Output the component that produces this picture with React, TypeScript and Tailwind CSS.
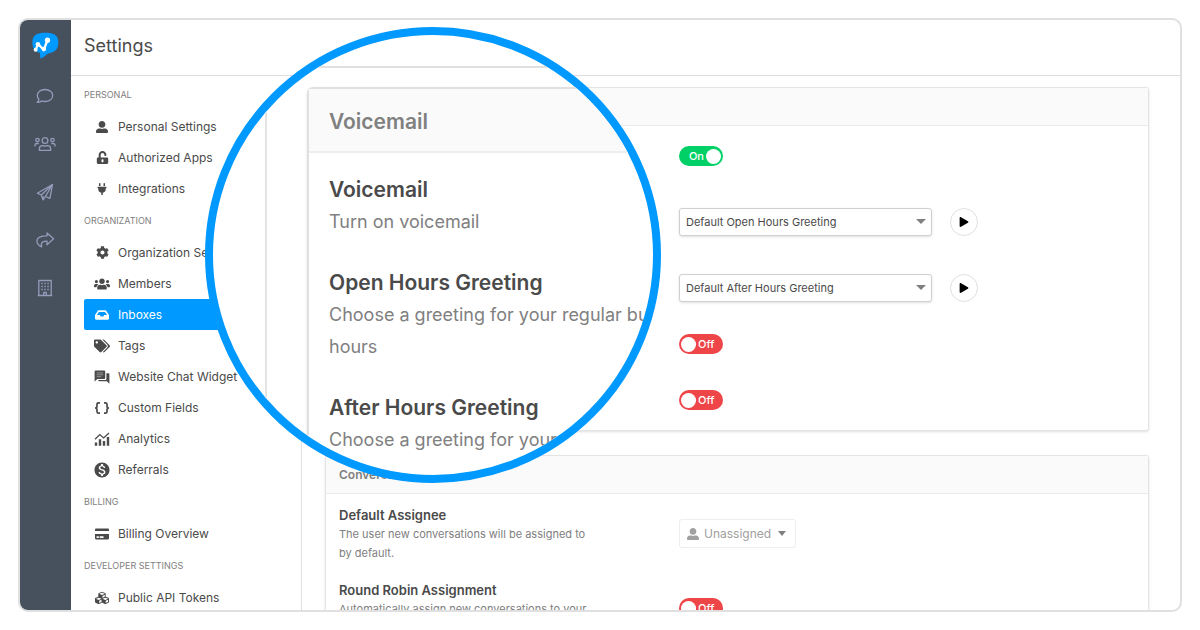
import type { ReactNode } from "react";
import {
  FaCog,
  FaCreditCard,
  FaCubes,
  FaInbox,
  FaPlay,
  FaPlug,
  FaTags,
  FaUnlockAlt,
  FaUserAlt,
  FaUsers,
} from "react-icons/fa";
import { MdMonetizationOn } from "react-icons/md";

const ChatWidgetIcon = () => (
  <svg viewBox="0 0 16 14" className="h-[14px] w-4" fill="currentColor">
    <path d="M1.600.5h8.600a1 1 0 0 1 1 1v6.600a1 1 0 0 1-1 1H3.400L.6 11.600V1.500a1 1 0 0 1 1-1z" />
    <path d="M12.400 3.200h2a1 1 0 0 1 1 1v9.500l-2.600-2.500H5.200a1 1 0 0 1-1-1v-.2h7.200a1 1 0 0 0 1-1z" />
    <path
      d="M2.600 2.900h6.600M2.600 4.800h6.600M2.600 6.700h4.600"
      stroke="white"
      strokeOpacity="0.600"
      strokeWidth="0.700"
    />
  </svg>
);

const BracesIcon = () => (
  <svg
    viewBox="0 0 16 14"
    className="h-[14px] w-4"
    fill="none"
    stroke="currentColor"
    strokeWidth="1.700"
  >
    <path d="M6 1.800H4.600c-1.100 0-1.600.5-1.600 1.500v1.900C3 6.300 2.400 7 1 7c1.400 0 2 .7 2 1.800v1.900c0 1 .5 1.500 1.600 1.500H6" />
    <path d="M10 1.800h1.400c1.100 0 1.600.5 1.600 1.500v1.900c0 1.100.6 1.800 2 1.800-1.400 0-2 .7-2 1.800v1.900c0 1-.5 1.500-1.600 1.500H10" />
  </svg>
);

const AnalyticsIcon = () => (
  <svg viewBox="0 0 16 14" className="h-[14px] w-4" fill="currentColor">
    <path d="M.800 10.400h2.400v3.400H.800zM4.800 7.300h2.400v6.500H4.800zM8.800 9h2.400v4.800H8.800zM12.800 5h2.400v8.800h-2.400z" />
    <path
      d="M1 7.300l4.800-4.700 3.800 3.300 5.400-5"
      fill="none"
      stroke="currentColor"
      strokeWidth="1.300"
    />
  </svg>
);

const sections = [
  {
    title: "PERSONAL",
    items: [
      { name: "Personal Settings", icon: <FaUserAlt className="size-3" /> },
      { name: "Authorized Apps", icon: <FaUnlockAlt className="size-[13px]" /> },
      { name: "Integrations", icon: <FaPlug className="size-3" /> },
    ],
  },
  {
    title: "ORGANIZATION",
    items: [
      { name: "Organization Settings", icon: <FaCog className="size-[13px]" /> },
      { name: "Members", icon: <FaUsers className="size-4" /> },
      { name: "Inboxes", icon: <FaInbox className="size-[14px]" />, active: true },
      { name: "Tags", icon: <FaTags className="size-4" /> },
      { name: "Website Chat Widget", icon: <ChatWidgetIcon /> },
      { name: "Custom Fields", icon: <BracesIcon /> },
      { name: "Analytics", icon: <AnalyticsIcon /> },
      { name: "Referrals", icon: <MdMonetizationOn className="size-[18px]" /> },
    ],
  },
  {
    title: "BILLING",
    items: [{ name: "Billing Overview", icon: <FaCreditCard className="size-[14px]" /> }],
  },
  {
    title: "DEVELOPER SETTINGS",
    items: [{ name: "Public API Tokens", icon: <FaCubes className="size-[14px]" /> }],
  },
];

const railIcons = [
  {
    name: "Conversations",
    paths: (
      <path d="M10 3.500c4.500 0 7.700 2.600 7.700 6s-3.200 6-7.700 6c-1.200 0-2.300-.2-3.300-.6-1 .9-2.500 1.500-4.600 1.500 1.100-1 1.700-2.100 1.800-3.200-1-1-1.600-2.300-1.600-3.700 0-3.400 3.200-6 7.700-6z" />
    ),
  },
  {
    name: "Contacts",
    paths: (
      <>
        <circle cx="10" cy="6.500" r="2.900" />
        <circle cx="2.500" cy="6" r="1.700" />
        <circle cx="17.500" cy="6" r="1.700" />
        <path d="M4.400 16.400v-1.700c0-2 1.300-3.100 3-3.100 1 .5 4.200.5 5.200 0 1.700 0 3 1.100 3 3.100v1.700z" />
        <path d="M0 12.400v-1c0-1.200.7-1.900 1.900-1.900h2M20 12.400v-1c0-1.200-.7-1.900-1.900-1.900h-2" />
      </>
    ),
  },
  {
    name: "Broadcasts",
    paths: (
      <>
        <path d="M17.500 2.500L2.300 11.200l4 1.800 1.900 4.800 2.200-3.300 4.500 1.800z" />
        <path d="M17.500 2.500L6.300 13M17.500 2.500l-7.100 12M8.200 17.800v-3.600" />
      </>
    ),
  },
  {
    name: "Forwarding",
    paths: (
      <path d="M12 2.900l6.600 5.900-6.600 5.900v-3.500c-4.200 0-6.500.9-5.400 5.700-2.600-1-4.700-3-4.700-5.800 0-4 3.500-5.200 10.100-5.200z" />
    ),
  },
  {
    name: "Company",
    paths: (
      <>
        <path d="M3.800 17.500v-15h12.400v15M2.800 17.500h14.400M8.700 17.500v-3h2.600v3" />
        <path
          d="M6.300 5.500h1.500m1.500 0h1.500m1.500 0h1.500M6.300 8.500h1.500m1.500 0h1.500m1.500 0h1.500M6.300 11.500h1.500m1.500 0h1.500m1.500 0h1.500"
          strokeWidth="1.600"
        />
      </>
    ),
  },
];

function Logo() {
  return (
    <svg viewBox="64 64 82 82" className="size-[27px]">
      <path
        d="M105 66c24 0 39 6 39 29 0 21-10 31-31 34-7 4-13 12-23 16-2-5-1-12-2-18-15-4-23-13-23-31 0-24 15-30 40-30z"
        fill="#0099ff"
      />
      <path
        d="M75 119l7-18 18 17 11-29"
        fill="none"
        stroke="white"
        strokeWidth="7"
        strokeLinejoin="round"
      />
      <circle cx="75" cy="118" r="6" fill="white" />
      <circle cx="82" cy="101" r="7" fill="white" />
      <circle cx="100" cy="116" r="7" fill="white" />
      <circle cx="111" cy="89" r="8" fill="white" />
    </svg>
  );
}

function Toggle({ id, label, on = false }: { id: string; label?: string; on?: boolean }) {
  return (
    <span
      className={`relative flex h-5 w-11 shrink-0 items-center gap-[2px] rounded-full px-[2px] text-[11px] font-medium text-white ${
        on ? "flex-row-reverse bg-[#00d066]" : "bg-[#ee4548]"
      }`}
    >
      <input
        id={id}
        type="checkbox"
        role="switch"
        aria-label={label}
        defaultChecked={on}
        className="absolute inset-0 cursor-pointer opacity-0"
      />
      <span className="size-[15px] rounded-full bg-white" />
      <span>{on ? "On" : "Off"}</span>
    </span>
  );
}

function GreetingSelect({ id, value }: { id: string; value: string }) {
  return (
    <div className="flex items-center gap-[18px]">
      <div className="relative w-[253px]">
        <select
          id={id}
          className="h-7 w-full appearance-none rounded-[3px] border border-[#d0d0d0] bg-white pl-[6px] text-[11px] text-[#4a4a4a] shadow-sm"
        >
          <option>{value}</option>
        </select>
        <svg
          viewBox="0 0 10 5"
          className="pointer-events-none absolute top-[11px] right-[6px] h-[5px] w-[10px]"
        >
          <path d="M0 0h10L5 5z" fill="#808080" />
        </svg>
      </div>
      <button
        aria-label={`Play ${value}`}
        className="flex size-7 items-center justify-center rounded-full border border-[#e0e0e0] bg-white"
      >
        <FaPlay className="size-[10px] text-black" />
      </button>
    </div>
  );
}

function Card({ title, children }: { title?: string; children: ReactNode }) {
  return (
    <section className="rounded-[3px] border border-[#e4e4e4] bg-white shadow-sm">
      <div className="flex h-[38px] items-center border-b border-[#ececec] bg-[#fafafa] px-[13px]">
        {title && <h2 className="text-[12px] font-semibold text-[#808080]">{title}</h2>}
      </div>
      {children}
    </section>
  );
}

function Row({ className, text, children }: { className: string; text?: ReactNode; children: ReactNode }) {
  return (
    <div className={`flex items-start px-[13px] ${className}`}>
      <div className="w-[340px] shrink-0">{text}</div>
      {children}
    </div>
  );
}

function Setting({ htmlFor, title, desc }: { htmlFor: string; title: string; desc: string }) {
  return (
    <div className="w-[250px]">
      <label htmlFor={htmlFor} className="block text-[13px] leading-5 font-semibold text-[#4a4a4a]">
        {title}
      </label>
      <p className="text-[11px] leading-[19px] text-[#808080]">{desc}</p>
    </div>
  );
}

const zoomed = [
  { id: "voicemail", title: "Voicemail", desc: "Turn on voicemail" },
  {
    id: "open-hours",
    title: "Open Hours Greeting",
    desc: "Choose a greeting for your regular business hours",
  },
  {
    id: "after-hours",
    title: "After Hours Greeting",
    desc: "Choose a greeting for your after hours",
  },
];

function Lens() {
  return (
    <div className="absolute top-[7px] left-[185px] size-[456px] overflow-hidden rounded-full border-8 border-[#0099ff] bg-white">
      <div className="h-[33px] border-b-2 border-[#e0e0e0]" />
      <div className="flex">
        <div className="h-[380px] w-[54px] shrink-0 border-r-2 border-[#e4e4e4]" />
        <div className="mt-[19px] ml-10 h-[420px] w-[480px] shrink-0 rounded-tl-md border-t-2 border-l-2 border-[#e0e0e0] shadow-sm">
          <div className="flex h-16 items-center border-b-2 border-[#eeeeee] bg-[#fafafa] pt-1 pl-5">
            <h2 className="text-[21px] font-semibold text-[#808080]">Voicemail</h2>
          </div>
          <div className="w-[410px] pt-5 pl-5">
            {zoomed.map((s) => (
              <div key={s.id} className="mb-7">
                <label htmlFor={s.id} className="block text-[21px] leading-[33px] font-semibold text-[#4a4a4a]">
                  {s.title}
                </label>
                <p className="text-lg leading-8 text-[#808080]">{s.desc}</p>
              </div>
            ))}
          </div>
        </div>
      </div>
    </div>
  );
}

export default function App() {
  return (
    <div className="h-screen bg-white p-[18px] font-['Inter',sans-serif]">
      <div className="relative flex h-full overflow-hidden rounded-[10px] border-2 border-[#e0e0e0]">
        <nav className="flex w-[51px] shrink-0 flex-col items-center bg-[#47515d] pt-3">
          <a href="#home" aria-label="Home">
            <Logo />
          </a>
          <div className="mt-[27px] flex flex-col gap-7 pr-px">
            {railIcons.map((r) => (
              <a key={r.name} href="#" aria-label={r.name}>
                <svg
                  viewBox="0 0 20 20"
                  className="size-5 overflow-visible"
                  fill="none"
                  stroke="#939cb8"
                  strokeWidth="1.300"
                  strokeLinejoin="round"
                >
                  {r.paths}
                </svg>
              </a>
            ))}
          </div>
        </nav>
        <div className="flex min-w-0 flex-1 flex-col">
          <header className="flex h-14 shrink-0 items-center border-b border-[#dedede] px-[13px] pb-1">
            <h1 className="text-lg text-[#4a4a4a]">Settings</h1>
          </header>
          <div className="flex min-h-0 flex-1">
            <aside className="w-[231px] shrink-0 overflow-hidden border-r border-[#e0e0e0] pt-[2px] pl-[13px]">
              {sections.map((s) => (
                <div key={s.title}>
                  <h2 className="text-[9px] leading-[33px] text-[#808080]">{s.title}</h2>
                  {s.items.map((item) => (
                    <a
                      key={item.name}
                      href="#"
                      className={`flex h-[31px] items-center gap-[6px] rounded-l-[2px] pl-2 text-xs whitespace-nowrap ${
                        "active" in item ? "bg-[#0099ff] text-white" : "text-[#4a4a4a]"
                      }`}
                    >
                      <span className="flex w-5 justify-center">{item.icon}</span>
                      {item.name}
                    </a>
                  ))}
                </div>
              ))}
            </aside>
            <main className="flex min-w-0 flex-1 flex-col gap-6 overflow-hidden pt-[11px] pr-[31px] pl-[23px]">
              <Card>
                <Row className="h-[82px] pt-5">
                  <Toggle id="voicemail" on />
                </Row>
                <Row className="h-[66px]">
                  <GreetingSelect id="open-hours" value="Default Open Hours Greeting" />
                </Row>
                <Row className="h-[60px]">
                  <GreetingSelect id="after-hours" value="Default After Hours Greeting" />
                </Row>
                <Row className="h-14">
                  <Toggle id="transcription" label="Voicemail transcription" />
                </Row>
                <Row className="h-10">
                  <Toggle id="notifications" label="Voicemail notifications" />
                </Row>
              </Card>
              <Card title="Conversations">
                <Row
                  className="h-[86px] pt-[11px]"
                  text={
                    <Setting
                      htmlFor="assignee"
                      title="Default Assignee"
                      desc="The user new conversations will be assigned to by default."
                    />
                  }
                >
                  <button
                    id="assignee"
                    className="mt-[14px] flex h-[29px] items-center gap-[5px] rounded-[3px] border border-[#eeeeee] pr-[9px] pl-[7px] text-xs text-[#a0a0a0]"
                  >
                    <FaUserAlt className="size-3" />
                    Unassigned
                    <svg viewBox="0 0 8 5" className="ml-[2px] h-[5px] w-2">
                      <path d="M0 0h8L4 5z" fill="#808080" />
                    </svg>
                  </button>
                </Row>
                <Row
                  className=""
                  text={
                    <Setting
                      htmlFor="round-robin"
                      title="Round Robin Assignment"
                      desc="Automatically assign new conversations to your team."
                    />
                  }
                >
                  <div className="pt-[18px]">
                    <Toggle id="round-robin" />
                  </div>
                </Row>
              </Card>
            </main>
          </div>
        </div>
        <Lens />
      </div>
    </div>
  );
}
